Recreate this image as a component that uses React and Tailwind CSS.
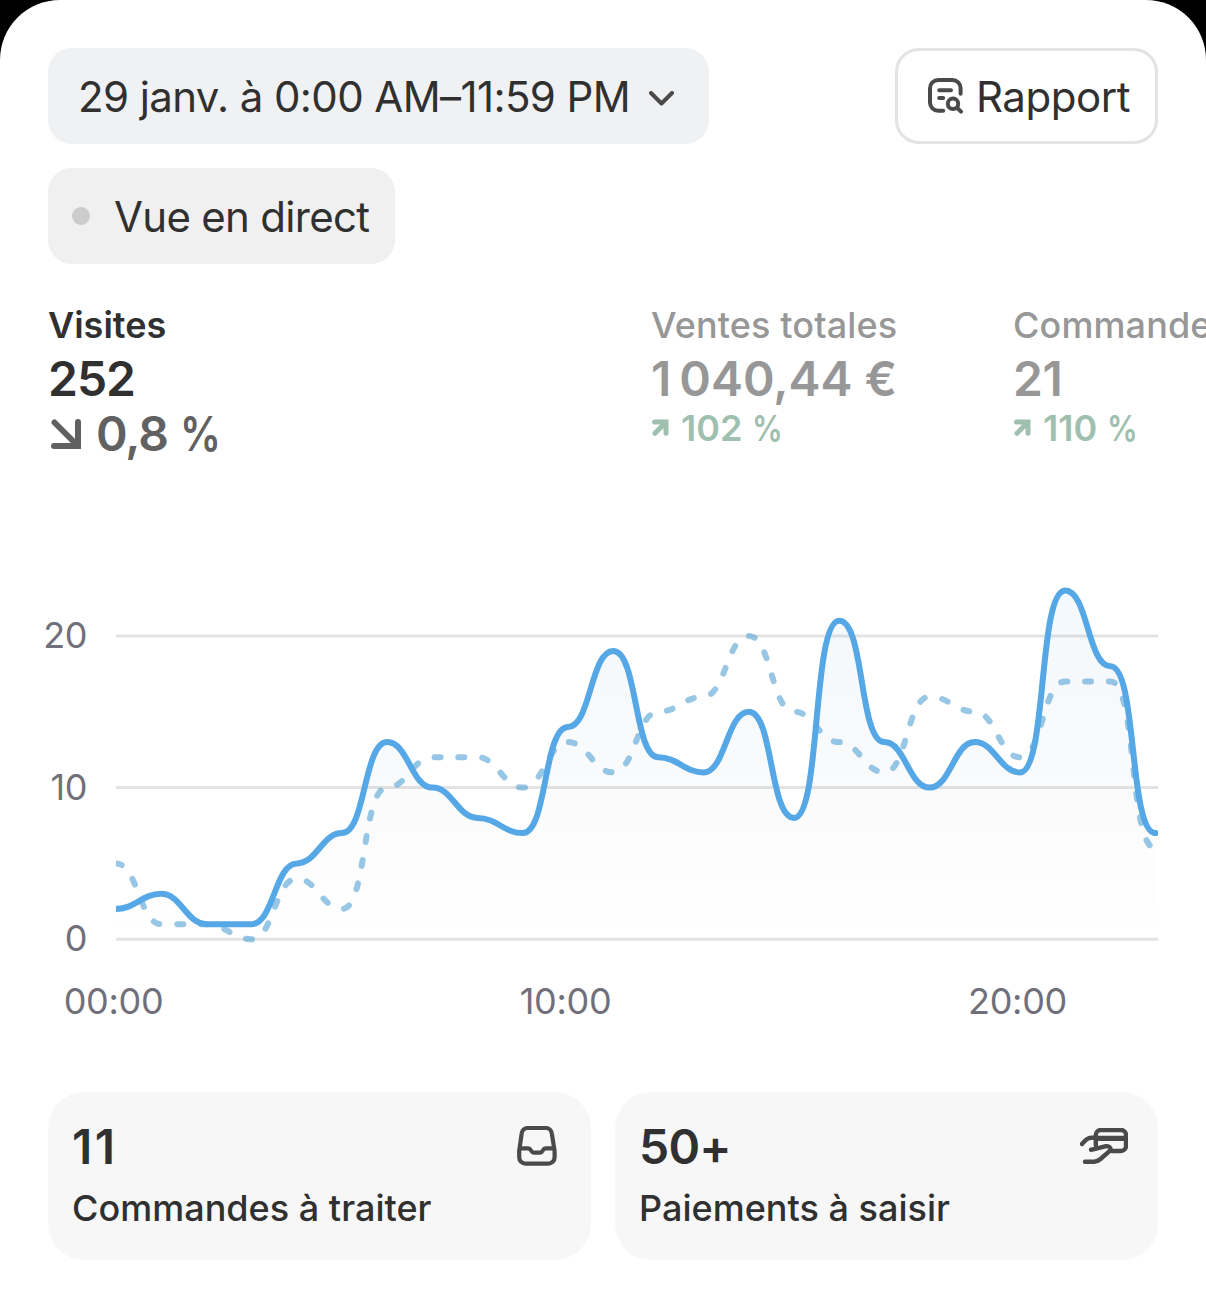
import clsx from "clsx";

const visits = [2, 3, 1, 1, 5, 7, 13, 10, 8, 7, 14, 19, 12, 11, 15, 8, 21, 13, 10, 13, 11, 23, 18, 7];
const previous = [5, 1, 1, 0, 4, 2, 10, 12, 12, 10, 13, 11, 15, 16, 20, 15, 13, 11, 16, 15, 12, 17, 17, 6];

const STEP = 45.2;
const UNIT = 15.17;
const BASE = 369.3;

// eases between hours, flat at every point, steeper gaps get longer handles
const buildPath = (values) =>
  values.reduce((path, value, i) => {
    const x = i * STEP;
    const y = BASE - value * UNIT;
    if (i === 0) return `M${x} ${y}`;
    const prevX = x - STEP;
    const prevY = BASE - values[i - 1] * UNIT;
    const handle = STEP * (0.4 + 0.2 * Math.min(1, Math.abs(y - prevY) / 150));
    return `${path} C${prevX + handle} ${prevY} ${x - handle} ${y} ${x} ${y}`;
  }, "");

function ReportIcon() {
  return (
    <svg className="w-9 h-9 shrink-0" viewBox="0 0 36 36" fill="none" stroke="#4a4a4a" strokeWidth="4" strokeLinecap="round">
      <path d="M32.6 15.8V10.2a8.2 8.2 0 0 0-8.2-8.2H10.2A8.2 8.2 0 0 0 2 10.2v14.4a8.2 8.2 0 0 0 8.2 8.2h5" />
      <path d="M11.2 12.2H23M11.2 20h4" />
      <circle cx="25" cy="25.8" r="5.2" />
      <path d="M29 29.8l4 3.8" />
    </svg>
  );
}

function InboxIcon() {
  return (
    <svg className="w-10 h-10" viewBox="0 0 40 40" fill="none" stroke="#4a4a4a" strokeWidth="4.2" strokeLinejoin="round">
      <path d="M10.6 2h18.2a6 6 0 0 1 6 5.3L37.6 25v6.2a6.4 6.4 0 0 1-6.4 6.4H8.6a6.4 6.4 0 0 1-6.4-6.4V25L4.7 7.3A6 6 0 0 1 10.6 2z" />
      <path d="M2.6 22.3h8.6c3 0 2.6 4.3 5.4 4.3h6.6c2.8 0 2.4-4.3 5.4-4.3h8.6" />
    </svg>
  );
}

function PaymentIcon() {
  return (
    <svg className="w-12 h-9" viewBox="0 0 48 36" fill="none" stroke="#4a4a4a" strokeWidth="4.4" strokeLinecap="round" strokeLinejoin="round">
      <path d="M15.8 17.5V7a5 5 0 0 1 5-5H41a5 5 0 0 1 5 5v11a5 5 0 0 1-5 5h-9" />
      <path d="M16 10.4h30" strokeWidth="5.2" />
      <path d="M2 16c2.6-3.2 5-6.3 9-6.3h4" />
      <path d="M11 21.8c5.5-.8 10-2.4 15-3.6 4.2-.6 5.8 3 3.2 5.2L20.5 31c-2 1.8-3.7 2.7-6.3 2.7H5" />
    </svg>
  );
}

function TrendUp() {
  return (
    <svg className="w-[17px] h-[17px] ml-px mb-[2px]" viewBox="0 0 17 17" fill="none" stroke="currentColor" strokeWidth="5" strokeLinecap="round">
      <path d="M2.5 3H14v11.3M3 14.3L13.3 3.8" />
    </svg>
  );
}

function Percent() {
  return <span className="inline-block origin-left scale-x-[0.85]">%</span>;
}

function Metric({ label, value, valueClass, change, className }) {
  return (
    <div className={clsx("shrink-0 whitespace-nowrap", className)}>
      <div className="h-12 leading-[48px] text-[36px] font-medium tracking-[0.13px] text-[#979797]">{label}</div>
      <div className={clsx("h-[60px] leading-[60px] text-[48px] font-semibold text-[#979797]", valueClass)}>{value}</div>
      <div className="flex items-center h-[38px] text-[36px] font-semibold text-[#9fc0ae]">
        <TrendUp />
        <span className="ml-3 mr-[10px]">{change}</span>
        <Percent />
      </div>
    </div>
  );
}

function TaskCard({ count, countClass, label, icon }) {
  return (
    <div className="flex-1 h-[168px] rounded-[36px] bg-[#f7f7f7] pl-6 pr-[30px] pt-6">
      <div className="flex items-center justify-between h-[60px]">
        <span className={clsx("mt-[2px] text-[48px] font-semibold", countClass)}>{count}</span>
        {icon}
      </div>
      <div className="h-[64px] leading-[64px] text-[36px] font-medium tracking-[0.02px]">{label}</div>
    </div>
  );
}

function Chart() {
  const line = buildPath(visits);
  return (
    <div className="mt-[111px]">
      <div className="flex h-[400px]">
        <div className="w-[87px] shrink-0 flex flex-col pt-[41px] text-right text-[36px] tracking-[-0.4px] text-[#70707b]">
          {[20, 10, 0].map((tick) => (
            <div key={tick} className="h-[151.7px] shrink-0 leading-[48px]">{tick}</div>
          ))}
        </div>
        <svg className="ml-[29px] w-[1042px] h-[400px]" viewBox="0 0 1042 400" fill="none">
          <defs>
            <linearGradient id="area" x1="0" y1="20" x2="0" y2="369" gradientUnits="userSpaceOnUse">
              <stop offset="0" stopColor="#2f9bea" stopOpacity="0.055" />
              <stop offset="0.5" stopColor="#3a5a80" stopOpacity="0.03" />
              <stop offset="1" stopColor="#555566" stopOpacity="0" />
            </linearGradient>
          </defs>
          {[0, 10, 20].map((tick) => (
            <path key={tick} d={`M0 ${BASE - tick * UNIT}H1042`} stroke="#e3e3e3" strokeWidth="3" />
          ))}
          <path d={`${line} V${BASE} H0 Z`} fill="url(#area)" />
          <path d={buildPath(previous)} stroke="#5ba6d6" strokeOpacity="0.63" strokeWidth="6" strokeLinecap="round" strokeDasharray="6 17.94" />
          <path d={line} stroke="#55a7e6" strokeWidth="6" strokeLinecap="round" />
        </svg>
      </div>
      <div className="flex ml-[-112.5px] mt-[7px] text-center text-[36px] leading-[48px] tracking-[-0.3px] text-[#70707b]">
        {["00:00", "10:00", "20:00"].map((hour) => (
          <span key={hour} className="w-[452px] shrink-0">{hour}</span>
        ))}
      </div>
    </div>
  );
}

export default function App() {
  return (
    <div className="bg-black w-[1206px] h-[1302px] overflow-hidden font-['Inter',sans-serif] text-[#303030]">
      <div className="h-full bg-white rounded-t-[60px] pt-12 overflow-hidden">
        <div className="flex justify-between px-12">
          <button className="flex items-center w-[661px] h-24 pl-[30px] rounded-3xl bg-[#f0f1f3] text-[42px] tracking-[-0.6px] whitespace-nowrap">
            <span className="mt-px">29 janv. à 0:00 AM–11:59 PM</span>
            <svg className="ml-[19px] mt-[5px] w-[25px] h-[15px]" viewBox="0 0 25 15" fill="none" stroke="#4a4a4a" strokeWidth="4" strokeLinecap="round" strokeLinejoin="round">
              <path d="M2 2l10.5 10.5L23 2" />
            </svg>
          </button>
          <button className="flex items-center w-[263px] h-24 pl-[30px] gap-3 rounded-3xl border-3 border-[#e3e3e3] text-[42px] tracking-[-0.45px]">
            <ReportIcon />
            <span className="mt-px">Rapport</span>
          </button>
        </div>
        <button className="flex items-center mt-6 ml-12 w-[347px] h-24 pl-6 gap-6 rounded-3xl bg-[#f0f0f0] text-[42px] tracking-[-0.7px] whitespace-nowrap">
          <span className="w-[18px] h-[18px] rounded-full bg-[#cccccc]" />
          <span className="mt-px">Vue en direct</span>
        </button>

        <div className="flex pl-12 mt-[37px]">
          <div className="w-[603px] shrink-0">
            <div className="h-12 leading-[48px] text-[36px] font-semibold">Visites</div>
            <div className="h-[60px] leading-[60px] text-[48px] font-semibold tracking-[-1px]">252</div>
            <div className="flex items-center h-[50px] text-[48px] font-semibold text-[#616161]">
              <svg className="ml-[3px] mr-[15px] w-[30px] h-[30px]" viewBox="0 0 30 30" fill="none" stroke="currentColor" strokeWidth="6" strokeLinecap="round">
                <path d="M3 27h24V3M3.5 3.5L26 26" />
              </svg>
              <span className="mr-3 tracking-[-1px]">0,8</span>
              <Percent />
            </div>
          </div>
          <Metric
            label="Ventes totales"
            value={"1\u202f040,44 €"}
            valueClass="tracking-[-0.4px]"
            change="102"
            className="w-[362px]"
          />
          <Metric label="Commandes" value="21" valueClass="tracking-[-0.5px]" change="110" />
        </div>

        <Chart />

        <div className="flex gap-6 px-12 mt-[67px]">
          <TaskCard
            count="11"
            countClass="tracking-[2.5px]"
            label="Commandes à traiter"
            icon={<span className="mr-1"><InboxIcon /></span>}
          />
          <TaskCard count="50+" countClass="tracking-[-0.8px]" label="Paiements à saisir" icon={<PaymentIcon />} />
        </div>
      </div>
    </div>
  );
}
